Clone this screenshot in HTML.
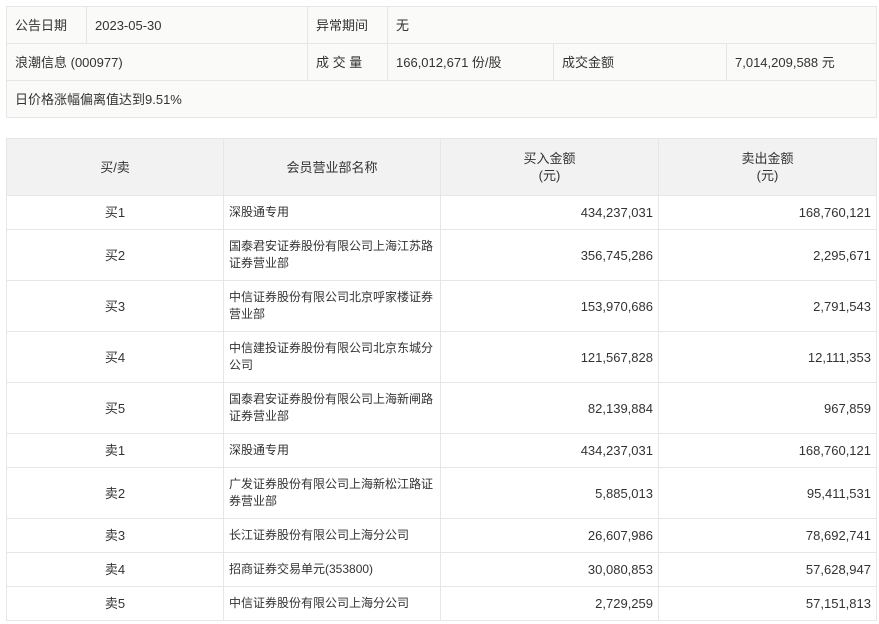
<!DOCTYPE html>
<html><head><meta charset="utf-8"><style>
body{margin:0;background:#fff;font-family:"Liberation Sans","Noto Sans CJK SC",sans-serif;font-size:13px;color:#333;}
table{border-collapse:collapse;position:absolute;left:6px;table-layout:fixed;}
td,th{border:1px solid #e6e6e6;padding:0 8px;font-weight:normal;line-height:17px;}
#t1{top:6px;width:870px;background:#fafaf8;}
#t1 td{height:36px;}
#t2{top:138px;width:870px;}
#t2 th{background:#f2f2f2;height:56px;text-align:center;}
#t2 td{padding:0 5px;}
.n{font-size:12px;}
.c{text-align:center}.r{text-align:right}
.s{height:34px}.d{height:51px}
</style></head><body>
<table id="t1">
<colgroup><col style="width:80px"><col style="width:221px"><col style="width:80px"><col style="width:166px"><col style="width:173px"><col style="width:150px"></colgroup>
<tr><td>公告日期</td><td>2023-05-30</td><td>异常期间</td><td colspan="3">无</td></tr>
<tr><td colspan="2">浪潮信息 (000977)</td><td>成 交 量</td><td>166,012,671 份/股</td><td>成交金额</td><td>7,014,209,588 元</td></tr>
<tr><td colspan="6">日价格涨幅偏离值达到9.51%</td></tr>
</table>
<table id="t2">
<colgroup><col style="width:217px"><col style="width:217px"><col style="width:218px"><col style="width:218px"></colgroup>
<tr><th>买/卖</th><th>会员营业部名称</th><th>买入金额<br>(元)</th><th>卖出金额<br>(元)</th></tr>
<tr class="s"><td class="c">买1</td><td class="n">深股通专用</td><td class="r">434,237,031</td><td class="r">168,760,121</td></tr>
<tr class="d"><td class="c">买2</td><td class="n">国泰君安证券股份有限公司上海江苏路证券营业部</td><td class="r">356,745,286</td><td class="r">2,295,671</td></tr>
<tr class="d"><td class="c">买3</td><td class="n">中信证券股份有限公司北京呼家楼证券营业部</td><td class="r">153,970,686</td><td class="r">2,791,543</td></tr>
<tr class="d"><td class="c">买4</td><td class="n">中信建投证券股份有限公司北京东城分公司</td><td class="r">121,567,828</td><td class="r">12,111,353</td></tr>
<tr class="d"><td class="c">买5</td><td class="n">国泰君安证券股份有限公司上海新闸路证券营业部</td><td class="r">82,139,884</td><td class="r">967,859</td></tr>
<tr class="s"><td class="c">卖1</td><td class="n">深股通专用</td><td class="r">434,237,031</td><td class="r">168,760,121</td></tr>
<tr class="d"><td class="c">卖2</td><td class="n">广发证券股份有限公司上海新松江路证券营业部</td><td class="r">5,885,013</td><td class="r">95,411,531</td></tr>
<tr class="s"><td class="c">卖3</td><td class="n">长江证券股份有限公司上海分公司</td><td class="r">26,607,986</td><td class="r">78,692,741</td></tr>
<tr class="s"><td class="c">卖4</td><td class="n">招商证券交易单元(353800)</td><td class="r">30,080,853</td><td class="r">57,628,947</td></tr>
<tr class="s"><td class="c">卖5</td><td class="n">中信证券股份有限公司上海分公司</td><td class="r">2,729,259</td><td class="r">57,151,813</td></tr>
</table>
</body></html>
